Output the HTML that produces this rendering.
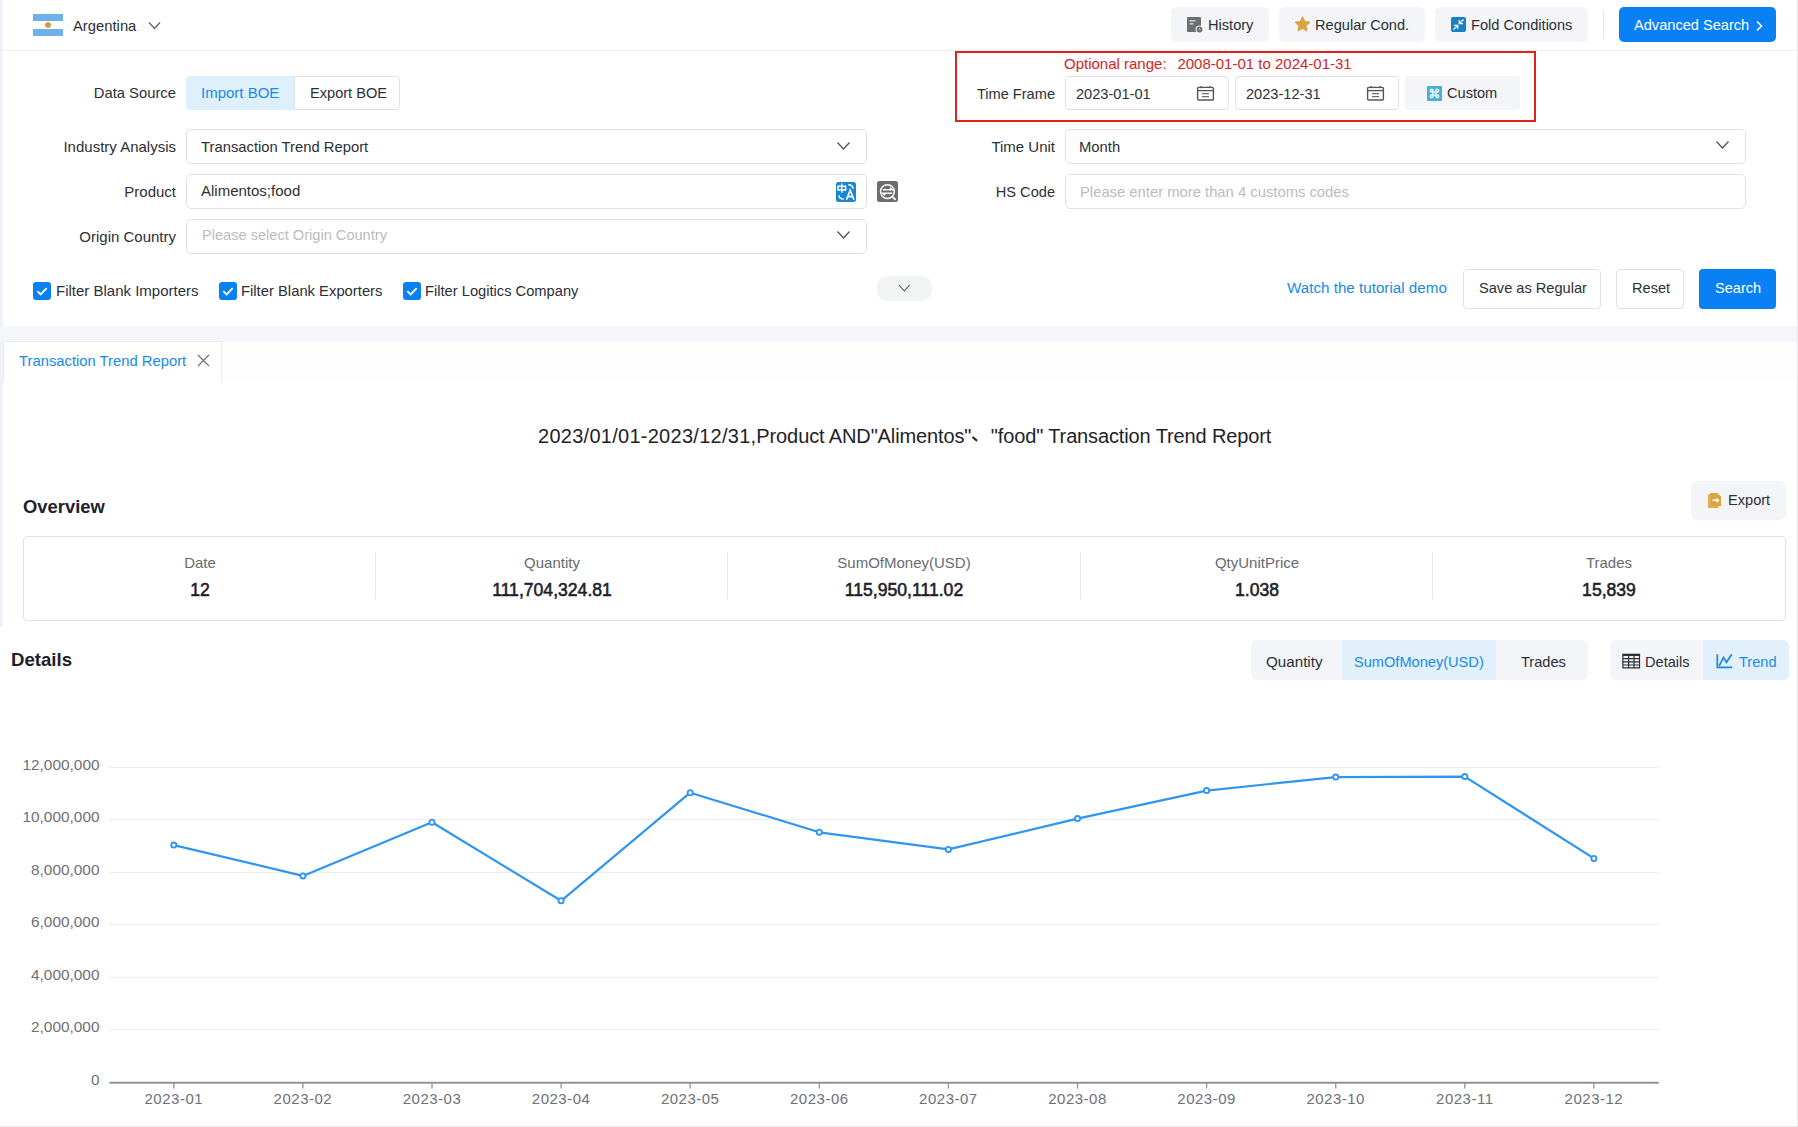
<!DOCTYPE html>
<html><head><meta charset="utf-8">
<style>
*{box-sizing:border-box;margin:0;padding:0}
html,body{width:1798px;height:1127px;overflow:hidden;background:#fff;font-family:"Liberation Sans",sans-serif;color:#2b2f36;font-size:15px}
.a{position:absolute}
.t{position:absolute;white-space:nowrap;line-height:1}
.r{position:absolute;white-space:nowrap;line-height:1;text-align:right}
.bg{position:absolute;background:#f3f5f8;border-radius:6px}
.inp{position:absolute;border:1px solid #dfe2e7;border-radius:5px;background:#fff}
.ob{position:absolute;border:1px solid #dfe2e7;border-radius:4px;background:#fff}
.cb{position:absolute;width:18px;height:18px;background:#0a80f5;border-radius:3px}
.lab{color:#686b70;font-size:15px}
.val{font-weight:normal;font-size:17.6px;color:#1d2129;-webkit-text-stroke:0.55px #1d2129}
</style></head><body>
<!-- strips -->
<div class="a" style="left:0;top:0;width:3px;height:627px;background:#eff3f7"></div>
<div class="a" style="left:1797px;top:0;width:1px;height:1127px;background:#e9e9ea"></div>
<div class="a" style="left:3px;top:50px;width:1794px;height:1px;background:#eceeef"></div>

<!-- ===== top bar ===== -->
<div class="a" style="left:33px;top:14px;width:30px;height:22px;background:#6eb0ea"></div>
<div class="a" style="left:33px;top:21px;width:30px;height:8px;background:#fff"></div>
<div class="a" style="left:45px;top:22px;width:6px;height:6px;border-radius:50%;background:#d99c3c"></div>
<div class="t" style="left:73px;top:19px;font-size:14.8px">Argentina</div>
<svg class="a" style="left:148px;top:21px" width="13" height="9" viewBox="0 0 13 9"><path d="M1 1.5 L6.5 7.5 L12 1.5" fill="none" stroke="#666" stroke-width="1.3"/></svg>

<div class="bg" style="left:1171px;top:7px;width:98px;height:35px"></div>
<svg class="a" style="left:1186px;top:16px" width="17" height="17" viewBox="0 0 17 17">
 <rect x="1" y="1" width="14" height="15" rx="1" fill="#6d6e72"/>
 <rect x="3.5" y="4" width="6" height="1.6" fill="#c8c9cc"/><rect x="3.5" y="7" width="4" height="1.6" fill="#c8c9cc"/>
 <circle cx="13.5" cy="13.5" r="4" fill="#f3f5f8"/><circle cx="13.5" cy="13.5" r="2.9" fill="#6d6e72"/>
 <path d="M13.3 11.8v1.9h1.4" stroke="#c8c9cc" stroke-width="0.8" fill="none"/>
</svg>
<div class="t" style="left:1208px;top:18px;font-size:14.6px">History</div>

<div class="bg" style="left:1279px;top:7px;width:146px;height:35px"></div>
<svg class="a" style="left:1294px;top:16px" width="17" height="16" viewBox="0 0 17 16"><path d="M8.5 1 L10.6 5.6 L15.6 6.2 L11.9 9.6 L12.9 14.8 L8.5 12.2 L4.1 14.8 L5.1 9.6 L1.4 6.2 L6.4 5.6 Z" fill="#dba443" stroke="#dba443" stroke-width="1.2" stroke-linejoin="round"/></svg>
<div class="t" style="left:1315px;top:18px;font-size:14.6px">Regular Cond.</div>

<div class="bg" style="left:1435px;top:7px;width:153px;height:35px"></div>
<svg class="a" style="left:1451px;top:17px" width="15" height="15" viewBox="0 0 15 15">
 <rect x="0" y="0" width="15" height="15" rx="2" fill="#1b7fc6"/>
 <path d="M12.5 2.5 L8.6 6.4 M8.3 3 V6.7 H12" stroke="#fff" stroke-width="1.3" fill="none"/>
 <path d="M2.5 12.5 L6.4 8.6 M2.9 8.3 H6.7 V12" stroke="#fff" stroke-width="1.3" fill="none"/>
</svg>
<div class="t" style="left:1471px;top:18px;font-size:14.6px">Fold Conditions</div>

<div class="a" style="left:1603px;top:10px;width:1px;height:29px;background:#e3e5e8"></div>
<div class="a" style="left:1619px;top:7px;width:157px;height:35px;background:#0a80f5;border-radius:5px"></div>
<div class="t" style="left:1634px;top:18px;color:#fff;font-size:14.6px">Advanced Search</div>
<svg class="a" style="left:1755px;top:20px" width="9" height="12" viewBox="0 0 9 12"><path d="M2 1.5 L6.5 6 L2 10.5" fill="none" stroke="#fff" stroke-width="1.6"/></svg>

<!-- ===== form left ===== -->
<div class="r" style="right:1622px;top:86px;font-size:14.8px">Data Source</div>
<div class="ob" style="left:186px;top:76px;width:214px;height:34px"></div>
<div class="a" style="left:186px;top:76px;width:108px;height:34px;background:#def0fc;border-radius:4px 0 0 4px"></div>
<div class="a" style="left:294px;top:76px;width:1px;height:34px;background:#dfe2e7"></div>
<div class="t" style="left:201px;top:85px;color:#1a8ae6;font-size:15px">Import BOE</div>
<div class="t" style="left:310px;top:86px;font-size:14.6px">Export BOE</div>

<div class="r" style="right:1622px;top:139px;font-size:15px">Industry Analysis</div>
<div class="inp" style="left:186px;top:129px;width:681px;height:35px"></div>
<div class="t" style="left:201px;top:140px;font-size:14.8px">Transaction Trend Report</div>
<svg class="a" style="left:836px;top:141px" width="15" height="10" viewBox="0 0 15 10"><path d="M1.5 1.5 L7.5 8 L13.5 1.5" fill="none" stroke="#555" stroke-width="1.3"/></svg>

<div class="r" style="right:1622px;top:184px;font-size:15px">Product</div>
<div class="inp" style="left:186px;top:174px;width:681px;height:35px"></div>
<div class="t" style="left:201px;top:183px;font-size:15px">Alimentos;food</div>
<svg class="a" style="left:836px;top:182px" width="20" height="20" viewBox="0 0 20 20">
 <rect x="0" y="0" width="20" height="20" rx="2.5" fill="#1a86d1"/>
 <path d="M2 4.2 H9.6 V8 H2 Z M5.8 1.4 V10.8" stroke="#fff" stroke-width="1.5" fill="none"/>
 <path d="M12.2 2.8 Q16.8 2.8 17.2 6.8" stroke="#fff" stroke-width="1.4" fill="none"/>
 <path d="M3 13.2 Q3 17 7.8 17" stroke="#fff" stroke-width="1.4" fill="none"/>
 <path d="M10.4 17.8 L14.2 8.2 L18 17.8 M11.8 14.6 H16.6" stroke="#fff" stroke-width="1.6" fill="none"/>
</svg>
<svg class="a" style="left:877px;top:181px" width="21" height="21" viewBox="0 0 21 21">
 <rect x="0" y="0" width="21" height="21" rx="2.5" fill="#6b6d71"/>
 <circle cx="10.4" cy="10.6" r="6.9" stroke="#fff" stroke-width="1.5" fill="none"/>
 <path d="M15.4 15.6 L18.6 18.8" stroke="#fff" stroke-width="1.7"/>
 <path d="M5.9 8.8 H15.2 L13 6.8 M15.2 12.2 H5.9 L8.1 14.2" stroke="#fff" stroke-width="1.5" fill="none"/>
</svg>

<div class="r" style="right:1622px;top:229px;font-size:15px">Origin Country</div>
<div class="inp" style="left:186px;top:219px;width:681px;height:35px"></div>
<div class="t" style="left:202px;top:228px;color:#b9bcc2;font-size:14.6px">Please select Origin Country</div>
<svg class="a" style="left:836px;top:230px" width="15" height="10" viewBox="0 0 15 10"><path d="M1.5 1.5 L7.5 8 L13.5 1.5" fill="none" stroke="#555" stroke-width="1.3"/></svg>

<!-- ===== form right ===== -->
<div class="a" style="left:955px;top:51px;width:581px;height:71px;border:2px solid #e3211d"></div>
<div class="t" style="left:1064px;top:56px;color:#d8221e;font-size:15px">Optional range:<span style="display:inline-block;width:10.8px"></span>2008-01-01 to 2024-01-31</div>
<div class="r" style="right:743px;top:87px;font-size:14.6px">Time Frame</div>
<div class="inp" style="left:1065px;top:76px;width:164px;height:34px;border-radius:4px"></div>
<div class="t" style="left:1076px;top:87px;font-size:14.6px">2023-01-01</div>
<svg class="a" style="left:1196px;top:85px" width="19" height="17" viewBox="0 0 19 17">
 <rect x="1.6" y="2.4" width="15.8" height="12.6" rx="1" stroke="#53565c" stroke-width="1.4" fill="none"/>
 <path d="M1.6 5.6 H17.4" stroke="#53565c" stroke-width="1.3"/>
 <path d="M5 1 V3.2 M14 1 V3.2" stroke="#53565c" stroke-width="1.3"/>
 <path d="M6 8.6 H13 M6 11.6 H13" stroke="#6a6d73" stroke-width="1.2"/>
</svg>
<div class="inp" style="left:1235px;top:76px;width:164px;height:34px;border-radius:4px"></div>
<div class="t" style="left:1246px;top:87px;font-size:14.6px">2023-12-31</div>
<svg class="a" style="left:1366px;top:85px" width="19" height="17" viewBox="0 0 19 17">
 <rect x="1.6" y="2.4" width="15.8" height="12.6" rx="1" stroke="#53565c" stroke-width="1.4" fill="none"/>
 <path d="M1.6 5.6 H17.4" stroke="#53565c" stroke-width="1.3"/>
 <path d="M5 1 V3.2 M14 1 V3.2" stroke="#53565c" stroke-width="1.3"/>
 <path d="M6 8.6 H13 M6 11.6 H13" stroke="#6a6d73" stroke-width="1.2"/>
</svg>
<div class="bg" style="left:1405px;top:76px;width:115px;height:34px;border-radius:4px"></div>
<svg class="a" style="left:1427px;top:86px" width="15" height="15" viewBox="0 0 15 15">
 <rect x="0" y="0" width="15" height="15" rx="1" fill="#4aaed6"/>
 <path d="M6 6 V9 H9 V6 Z M6 6 H4.7 A1.3 1.3 0 1 1 6 4.7 Z M9 6 V4.7 A1.3 1.3 0 1 1 10.3 6 Z M9 9 H10.3 A1.3 1.3 0 1 1 9 10.3 Z M6 9 V10.3 A1.3 1.3 0 1 1 4.7 9 Z" stroke="#e2f3fa" stroke-width="1.7" fill="none"/>
</svg>
<div class="t" style="left:1447px;top:86px;font-size:14.6px">Custom</div>

<div class="r" style="right:743px;top:139px;font-size:15px">Time Unit</div>
<div class="inp" style="left:1065px;top:129px;width:681px;height:35px"></div>
<div class="t" style="left:1079px;top:140px;font-size:14.8px">Month</div>
<svg class="a" style="left:1715px;top:140px" width="15" height="10" viewBox="0 0 15 10"><path d="M1.5 1.5 L7.5 8 L13.5 1.5" fill="none" stroke="#555" stroke-width="1.3"/></svg>

<div class="r" style="right:743px;top:185px;font-size:14.6px">HS Code</div>
<div class="inp" style="left:1065px;top:174px;width:681px;height:35px"></div>
<div class="t" style="left:1080px;top:185px;color:#b9bcc2;font-size:14.8px">Please enter more than 4 customs codes</div>

<!-- checkboxes -->
<div class="cb" style="left:33px;top:282px"></div>
<svg class="a" style="left:33px;top:282px" width="18" height="18" viewBox="0 0 18 18"><path d="M4.3 9.2 L7.6 12.4 L13.7 6.1" fill="none" stroke="#fff" stroke-width="1.8"/></svg>
<div class="t" style="left:56px;top:283px;font-size:15px">Filter Blank Importers</div>
<div class="cb" style="left:219px;top:282px"></div>
<svg class="a" style="left:219px;top:282px" width="18" height="18" viewBox="0 0 18 18"><path d="M4.3 9.2 L7.6 12.4 L13.7 6.1" fill="none" stroke="#fff" stroke-width="1.8"/></svg>
<div class="t" style="left:241px;top:284px;font-size:14.8px">Filter Blank Exporters</div>
<div class="cb" style="left:403px;top:282px"></div>
<svg class="a" style="left:403px;top:282px" width="18" height="18" viewBox="0 0 18 18"><path d="M4.3 9.2 L7.6 12.4 L13.7 6.1" fill="none" stroke="#fff" stroke-width="1.8"/></svg>
<div class="t" style="left:425px;top:284px;font-size:14.7px">Filter Logitics Company</div>

<div class="a" style="left:877px;top:276px;width:55px;height:25px;border-radius:11px;background:#f2f3f5"></div>
<svg class="a" style="left:897px;top:283px" width="14" height="10" viewBox="0 0 14 10"><path d="M2 2.2 L7.3 8 L12.6 2.2" fill="none" stroke="#5a5d63" stroke-width="1.1"/></svg>

<div class="t" style="left:1287px;top:280px;color:#1a8ae6;font-size:15.2px">Watch the tutorial demo</div>
<div class="ob" style="left:1463px;top:269px;width:138px;height:40px"></div>
<div class="t" style="left:1479px;top:281px;font-size:14.6px">Save as Regular</div>
<div class="ob" style="left:1616px;top:269px;width:68px;height:40px"></div>
<div class="t" style="left:1632px;top:281px;font-size:14.6px">Reset</div>
<div class="a" style="left:1699px;top:269px;width:77px;height:40px;background:#0a80f5;border-radius:4px"></div>
<div class="t" style="left:1715px;top:281px;color:#fff;font-size:14.6px">Search</div>

<!-- gray band -->
<div class="a" style="left:0;top:326px;width:1797px;height:16px;background:#f4f6f9"></div>

<!-- tab -->
<div class="a" style="left:3px;top:342px;width:1794px;height:39px;background:#fdfdfd"></div>
<div class="a" style="left:3px;top:341px;width:219px;height:41px;background:#fff;border:1px solid #e9ebee;border-bottom:none"></div>
<div class="t" style="left:19px;top:354px;color:#1a8ae6;font-size:14.8px">Transaction Trend Report</div>
<svg class="a" style="left:196px;top:353px" width="15" height="15" viewBox="0 0 15 15"><path d="M2 2 L13 13 M13 2 L2 13" stroke="#707378" stroke-width="1.2"/></svg>

<!-- title -->
<div class="t" style="left:538px;top:426px;font-size:20px;color:#1f2329"><span style="letter-spacing:0.27px">2023/01/01-2023/12/31,</span><span style="letter-spacing:-0.12px">Product AND"Alimentos"</span><span style="display:inline-block;width:19.5px;position:relative;height:10px"><span style="position:absolute;left:1px;top:4.5px;width:6px;height:1.5px;background:#1f2329;transform:rotate(40deg)"></span></span><span style="letter-spacing:-0.13px">"food" Transaction Trend Report</span></div>

<!-- overview -->
<div class="t" style="left:23px;top:498px;font-size:18.4px;font-weight:bold;color:#1d2129">Overview</div>
<div class="bg" style="left:1691px;top:481px;width:95px;height:39px"></div>
<svg class="a" style="left:1707px;top:492px" width="15" height="17" viewBox="0 0 15 17">
 <path d="M1 2.2 V16 H11.6 V14 H3.1 V2.2 Z" fill="#e3ae52"/>
 <path d="M3.1 0.9 H10.4 L14 4.5 V14 H3.1 Z" fill="#dba443"/>
 <path d="M5.4 8.3 H11.2 M9.4 6.6 L11.3 8.3 L9.4 10" stroke="#fff" stroke-width="1.5" fill="none"/>
</svg>
<div class="t" style="left:1728px;top:493px;font-size:14.6px">Export</div>
<div class="ob" style="left:23px;top:536px;width:1763px;height:85px"></div>
<div class="a" style="left:375px;top:552px;width:1px;height:47px;background:#e4e6ea"></div>
<div class="a" style="left:727px;top:552px;width:1px;height:47px;background:#e4e6ea"></div>
<div class="a" style="left:1080px;top:552px;width:1px;height:47px;background:#e4e6ea"></div>
<div class="a" style="left:1432px;top:552px;width:1px;height:47px;background:#e4e6ea"></div>
<div class="t lab" style="left:24px;width:352px;text-align:center;top:555px">Date</div>
<div class="t val" style="left:24px;width:352px;text-align:center;top:582px">12</div>
<div class="t lab" style="left:376px;width:352px;text-align:center;top:555px">Quantity</div>
<div class="t val" style="left:376px;width:352px;text-align:center;top:582px">111,704,324.81</div>
<div class="t lab" style="left:728px;width:352px;text-align:center;top:555px">SumOfMoney(USD)</div>
<div class="t val" style="left:728px;width:352px;text-align:center;top:582px">115,950,111.02</div>
<div class="t lab" style="left:1081px;width:352px;text-align:center;top:555px">QtyUnitPrice</div>
<div class="t val" style="left:1081px;width:352px;text-align:center;top:582px">1.038</div>
<div class="t lab" style="left:1433px;width:352px;text-align:center;top:555px">Trades</div>
<div class="t val" style="left:1433px;width:352px;text-align:center;top:582px">15,839</div>

<!-- details -->
<div class="t" style="left:11px;top:651px;font-size:18.6px;font-weight:bold;color:#1d2129">Details</div>
<div class="bg" style="left:1251px;top:640px;width:337px;height:40px"></div>
<div class="a" style="left:1342px;top:640px;width:154px;height:40px;background:#e1f0fb"></div>
<div class="t" style="left:1266px;top:654px;font-size:15.2px">Quantity</div>
<div class="t" style="left:1354px;top:655px;color:#1a8ae6;font-size:14.6px">SumOfMoney(USD)</div>
<div class="t" style="left:1521px;top:655px;font-size:14.6px">Trades</div>
<div class="bg" style="left:1610px;top:640px;width:179px;height:40px"></div>
<div class="a" style="left:1703px;top:640px;width:86px;height:40px;background:#e1f0fb;border-radius:0 6px 6px 0"></div>
<svg class="a" style="left:1622px;top:653px" width="19" height="16" viewBox="0 0 19 16">
 <rect x="0.3" y="0.7" width="17.8" height="2.3" fill="#2b2f36"/>
 <path d="M0.3 5.6 H18.1 M0.3 8.8 H18.1 M0.3 12 H18.1 M0.3 14.8 H18.1 M0.9 2.5 V15.2 M6.6 2.5 V15.2 M12 2.5 V15.2 M17.5 2.5 V15.2" stroke="#2b2f36" stroke-width="1.2" fill="none"/>
</svg>
<div class="t" style="left:1645px;top:655px;font-size:14.6px">Details</div>
<svg class="a" style="left:1716px;top:653px" width="17" height="16" viewBox="0 0 17 16">
 <path d="M1.3 1.2 V14.4 H16.2" stroke="#1a8ae6" stroke-width="1.7" fill="none"/>
 <path d="M3.2 12.8 L7.5 4.4 L10.4 9.3 L15.8 1.3" stroke="#1a8ae6" stroke-width="1.7" fill="none" stroke-linejoin="miter"/>
</svg>
<div class="t" style="left:1739px;top:655px;color:#1a8ae6;font-size:14.6px">Trend</div>
<svg class="a" style="left:0;top:690px" width="1797" height="436" viewBox="0 690 1797 436">
<line x1="109.5" y1="767.5" x2="1658.8" y2="767.5" stroke="#e9ecf1" stroke-width="1"/>
<line x1="109.5" y1="819.5" x2="1658.8" y2="819.5" stroke="#e9ecf1" stroke-width="1"/>
<line x1="109.5" y1="872.5" x2="1658.8" y2="872.5" stroke="#e9ecf1" stroke-width="1"/>
<line x1="109.5" y1="924.5" x2="1658.8" y2="924.5" stroke="#e9ecf1" stroke-width="1"/>
<line x1="109.5" y1="977.5" x2="1658.8" y2="977.5" stroke="#e9ecf1" stroke-width="1"/>
<line x1="109.5" y1="1029.5" x2="1658.8" y2="1029.5" stroke="#e9ecf1" stroke-width="1"/>
<line x1="109.5" y1="1082.7" x2="1658.8" y2="1082.7" stroke="#8f939a" stroke-width="2"/>
<line x1="173.8" y1="1082" x2="173.8" y2="1088.5" stroke="#8f939a" stroke-width="1.3"/>
<line x1="302.9" y1="1082" x2="302.9" y2="1088.5" stroke="#8f939a" stroke-width="1.3"/>
<line x1="432.0" y1="1082" x2="432.0" y2="1088.5" stroke="#8f939a" stroke-width="1.3"/>
<line x1="561.1" y1="1082" x2="561.1" y2="1088.5" stroke="#8f939a" stroke-width="1.3"/>
<line x1="690.2" y1="1082" x2="690.2" y2="1088.5" stroke="#8f939a" stroke-width="1.3"/>
<line x1="819.3" y1="1082" x2="819.3" y2="1088.5" stroke="#8f939a" stroke-width="1.3"/>
<line x1="948.4" y1="1082" x2="948.4" y2="1088.5" stroke="#8f939a" stroke-width="1.3"/>
<line x1="1077.5" y1="1082" x2="1077.5" y2="1088.5" stroke="#8f939a" stroke-width="1.3"/>
<line x1="1206.6" y1="1082" x2="1206.6" y2="1088.5" stroke="#8f939a" stroke-width="1.3"/>
<line x1="1335.7" y1="1082" x2="1335.7" y2="1088.5" stroke="#8f939a" stroke-width="1.3"/>
<line x1="1464.8" y1="1082" x2="1464.8" y2="1088.5" stroke="#8f939a" stroke-width="1.3"/>
<line x1="1593.9" y1="1082" x2="1593.9" y2="1088.5" stroke="#8f939a" stroke-width="1.3"/>
<polyline points="173.8,845.1 302.9,875.9 432.0,822.3 561.1,900.8 690.2,792.7 819.3,832.3 948.4,849.4 1077.5,818.6 1206.6,790.6 1335.7,777.1 1464.8,776.6 1593.9,858.4" fill="none" stroke="#2f95ee" stroke-width="2.2" stroke-linejoin="round"/>
<circle cx="173.8" cy="845.1" r="2.6" fill="#fff" stroke="#2f95ee" stroke-width="1.8"/>
<circle cx="302.9" cy="875.9" r="2.6" fill="#fff" stroke="#2f95ee" stroke-width="1.8"/>
<circle cx="432.0" cy="822.3" r="2.6" fill="#fff" stroke="#2f95ee" stroke-width="1.8"/>
<circle cx="561.1" cy="900.8" r="2.6" fill="#fff" stroke="#2f95ee" stroke-width="1.8"/>
<circle cx="690.2" cy="792.7" r="2.6" fill="#fff" stroke="#2f95ee" stroke-width="1.8"/>
<circle cx="819.3" cy="832.3" r="2.6" fill="#fff" stroke="#2f95ee" stroke-width="1.8"/>
<circle cx="948.4" cy="849.4" r="2.6" fill="#fff" stroke="#2f95ee" stroke-width="1.8"/>
<circle cx="1077.5" cy="818.6" r="2.6" fill="#fff" stroke="#2f95ee" stroke-width="1.8"/>
<circle cx="1206.6" cy="790.6" r="2.6" fill="#fff" stroke="#2f95ee" stroke-width="1.8"/>
<circle cx="1335.7" cy="777.1" r="2.6" fill="#fff" stroke="#2f95ee" stroke-width="1.8"/>
<circle cx="1464.8" cy="776.6" r="2.6" fill="#fff" stroke="#2f95ee" stroke-width="1.8"/>
<circle cx="1593.9" cy="858.4" r="2.6" fill="#fff" stroke="#2f95ee" stroke-width="1.8"/>
<g font-family="Liberation Sans" font-size="15.4" fill="#6e7079" text-anchor="end">
<text x="99.5" y="770.1">12,000,000</text>
<text x="99.5" y="822.1">10,000,000</text>
<text x="99.5" y="875.1">8,000,000</text>
<text x="99.5" y="927.1">6,000,000</text>
<text x="99.5" y="980.1">4,000,000</text>
<text x="99.5" y="1032.1">2,000,000</text>
<text x="99.5" y="1085.3">0</text>
</g>
<g font-family="Liberation Sans" font-size="15" letter-spacing="0.5" fill="#6e7079" text-anchor="middle">
<text x="173.8" y="1103.8">2023-01</text>
<text x="302.9" y="1103.8">2023-02</text>
<text x="432.0" y="1103.8">2023-03</text>
<text x="561.1" y="1103.8">2023-04</text>
<text x="690.2" y="1103.8">2023-05</text>
<text x="819.3" y="1103.8">2023-06</text>
<text x="948.4" y="1103.8">2023-07</text>
<text x="1077.5" y="1103.8">2023-08</text>
<text x="1206.6" y="1103.8">2023-09</text>
<text x="1335.7" y="1103.8">2023-10</text>
<text x="1464.8" y="1103.8">2023-11</text>
<text x="1593.9" y="1103.8">2023-12</text>
</g></svg><div class="a" style="left:0;top:1126px;width:1797px;height:1px;background:#ebe8e7"></div>
</body></html>
